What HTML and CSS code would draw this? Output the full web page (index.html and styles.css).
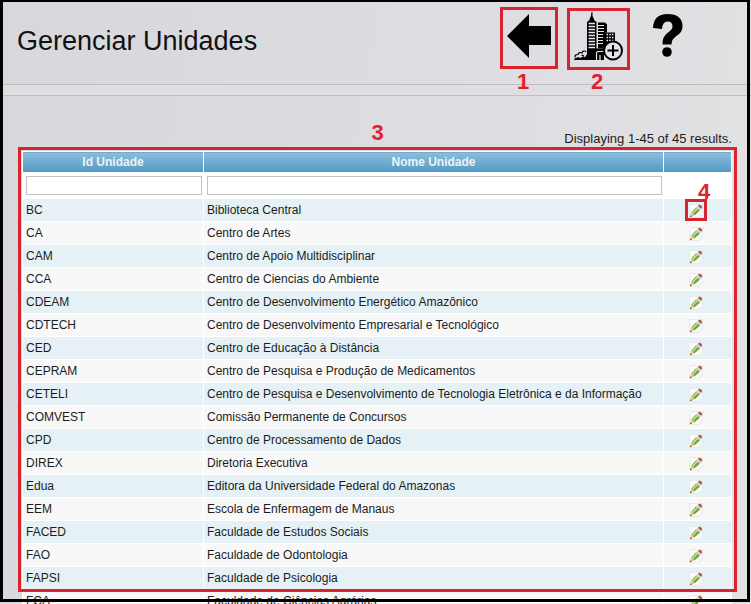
FILE: index.html
```html
<!DOCTYPE html>
<html lang="pt-BR">
<head>
<meta charset="utf-8">
<title>Gerenciar Unidades</title>
<link rel="stylesheet" href="styles.css">
</head>
<body>
<svg class="defs" aria-hidden="true">
  <defs>
    <linearGradient id="lead" x1="0" y1="0" x2="1" y2="1">
      <stop offset="0" stop-color="#a5cf72"/>
      <stop offset="1" stop-color="#4d8a2c"/>
    </linearGradient>
    <symbol id="pencil" viewBox="0 0 16 16">
      <path d="M1.500 1.500h13v10l-3 3h-10z" fill="#fbfbfb" stroke="#e6e9ea" stroke-width="1"/>
      <path d="M11.500 14.500v-3h3z" fill="#e9ecee"/>
      <path d="M2 14l1.200-4.500 3.500 2.800z" fill="#ecc56c"/>
      <path d="M2 14.300l.5-2 1.500 1.300z" fill="#5a4a28"/>
      <path d="M3.200 9.500L8 4.300l4 3.200-5.300 4.800z" fill="url(#lead)"/>
      <path d="M4.500 10.300l5-5" stroke="#cfe8a8" stroke-width="1.200"/>
      <path d="M8 4.300l1.600-1.600 4 3.200L12 7.500z" fill="#d8cfc4"/>
      <path d="M10 2.700l1.200-1q2.800.2 3 2.600l-1 1.400z" fill="#9c5342"/>
    </symbol>
  </defs>
</svg>
<header class="header">
  <h1>Gerenciar Unidades</h1>
  <nav class="tools" aria-label="Ações">
    <a class="tool marked" href="#" aria-label="Voltar">
      <svg width="44" height="44" viewBox="0 0 44 44"><path d="M0 22L22 0v12h22v19H22v13z"/></svg>
      <span class="mark">1</span>
    </a>
    <a class="tool marked wide" href="#" aria-label="Adicionar unidade">
      <svg width="50" height="50" viewBox="0 0 50 50">
        <path d="M17.500 0h1v4l1.500 3v1l2.500 2v38H13V10l2.500-2V7l1.500-3z"/>
        <path d="M14.500 11.500h6.500M14.500 14.500h6.500M14.500 17.500h6.500M14.500 20.500h6.500M14.500 23.500h6.500M14.500 26.500h6.500M14.500 29.500h6.500M14.500 32.500h6.500M14.500 35.500h6.500" stroke="#e8e6ea" stroke-width="1.300"/>
        <path d="M24 10.500h7l2 2v8h-2v16h-7z"/>
        <path d="M24 13.500h6M24 16.500h6M24 19.500h6M24 22.500h5M24 25.500h5M24 28.500h5M24 31.500h5" stroke="#e8e6ea"/>
        <path d="M31 20.500h10V33H31z"/>
        <path d="M32.500 22.500h7M32.500 25.500h7M32.500 28.500h7" stroke="#e8e6ea" stroke-width="1.600" stroke-dasharray="1.600 1.100"/>
        <path d="M20 48V38l1-1.500h9v11.500z"/>
        <path d="M22.500 48v-7l1-1.500h6M26 48v-5" fill="none" stroke="#e8e6ea" stroke-width="1.200"/>
        <path d="M1 45.500q-.5-3 3-3 1-3 4-1.500.5-3 4.500-1.500M7.500 43.500q1.500-.5 2.500 1" fill="none" stroke="#000" stroke-width="1.200"/>
        <path d="M0 48q.5-2.500 3.500-2.500 2-.5 3 .8 2-2.300 4.500-1L13 42h1.500v6z"/>
        <circle cx="39" cy="38.500" r="9" fill="#e5e3e7" stroke="#000" stroke-width="2"/>
        <path d="M39 33v11M33.500 38.500h11" stroke="#000" stroke-width="2"/>
      </svg>
      <span class="mark">2</span>
    </a>
    <a class="tool help" href="#" aria-label="Ajuda">
      <svg width="32" height="44" viewBox="0 0 32 44">
        <path d="M1 14Q1.500 0 15.500 0 30.500 0 30.500 12.500q0 5.500-5.500 9-5.500 3.500-5.500 9H10.500Q10 23 16 18.500q4.500-3 4.500-6Q20.500 7.500 15.500 7.500T10 15z"/>
        <circle cx="15" cy="38" r="4.800"/>
      </svg>
    </a>
  </nav>
</header>
<div class="band"></div>
<main class="content">
  <p class="summary">Displaying 1-45 of 45 results.</p>
  <div class="grid">
    <table>
      <colgroup><col class="col-id"><col class="col-name"><col class="col-edit"></colgroup>
      <thead>
        <tr><th>Id Unidade</th><th>Nome Unidade</th><th></th></tr>
        <tr class="filters">
          <td><input type="text" aria-label="Id Unidade"></td>
          <td><input type="text" aria-label="Nome Unidade"></td>
          <td></td>
        </tr>
      </thead>
      <tbody>
        <tr><td>BC</td><td>Biblioteca Central</td><td><a class="edit marked" href="#" aria-label="Editar BC"><svg><use href="#pencil"/></svg><span class="mark">4</span></a></td></tr>
        <tr><td>CA</td><td>Centro de Artes</td><td><a class="edit" href="#" aria-label="Editar CA"><svg><use href="#pencil"/></svg></a></td></tr>
        <tr><td>CAM</td><td>Centro de Apoio Multidisciplinar</td><td><a class="edit" href="#" aria-label="Editar CAM"><svg><use href="#pencil"/></svg></a></td></tr>
        <tr><td>CCA</td><td>Centro de Ciencias do Ambiente</td><td><a class="edit" href="#" aria-label="Editar CCA"><svg><use href="#pencil"/></svg></a></td></tr>
        <tr><td>CDEAM</td><td>Centro de Desenvolvimento Energético Amazônico</td><td><a class="edit" href="#" aria-label="Editar CDEAM"><svg><use href="#pencil"/></svg></a></td></tr>
        <tr><td>CDTECH</td><td>Centro de Desenvolvimento Empresarial e Tecnológico</td><td><a class="edit" href="#" aria-label="Editar CDTECH"><svg><use href="#pencil"/></svg></a></td></tr>
        <tr><td>CED</td><td>Centro de Educação à Distância</td><td><a class="edit" href="#" aria-label="Editar CED"><svg><use href="#pencil"/></svg></a></td></tr>
        <tr><td>CEPRAM</td><td>Centro de Pesquisa e Produção de Medicamentos</td><td><a class="edit" href="#" aria-label="Editar CEPRAM"><svg><use href="#pencil"/></svg></a></td></tr>
        <tr><td>CETELI</td><td>Centro de Pesquisa e Desenvolvimento de Tecnologia Eletrônica e da Informação</td><td><a class="edit" href="#" aria-label="Editar CETELI"><svg><use href="#pencil"/></svg></a></td></tr>
        <tr><td>COMVEST</td><td>Comissão Permanente de Concursos</td><td><a class="edit" href="#" aria-label="Editar COMVEST"><svg><use href="#pencil"/></svg></a></td></tr>
        <tr><td>CPD</td><td>Centro de Processamento de Dados</td><td><a class="edit" href="#" aria-label="Editar CPD"><svg><use href="#pencil"/></svg></a></td></tr>
        <tr><td>DIREX</td><td>Diretoria Executiva</td><td><a class="edit" href="#" aria-label="Editar DIREX"><svg><use href="#pencil"/></svg></a></td></tr>
        <tr><td>Edua</td><td>Editora da Universidade Federal do Amazonas</td><td><a class="edit" href="#" aria-label="Editar Edua"><svg><use href="#pencil"/></svg></a></td></tr>
        <tr><td>EEM</td><td>Escola de Enfermagem de Manaus</td><td><a class="edit" href="#" aria-label="Editar EEM"><svg><use href="#pencil"/></svg></a></td></tr>
        <tr><td>FACED</td><td>Faculdade de Estudos Sociais</td><td><a class="edit" href="#" aria-label="Editar FACED"><svg><use href="#pencil"/></svg></a></td></tr>
        <tr><td>FAO</td><td>Faculdade de Odontologia</td><td><a class="edit" href="#" aria-label="Editar FAO"><svg><use href="#pencil"/></svg></a></td></tr>
        <tr><td>FAPSI</td><td>Faculdade de Psicologia</td><td><a class="edit" href="#" aria-label="Editar FAPSI"><svg><use href="#pencil"/></svg></a></td></tr>
        <tr><td>FCA</td><td>Faculdade de Ciências Agrárias</td><td><a class="edit" href="#" aria-label="Editar FCA"><svg><use href="#pencil"/></svg></a></td></tr>
      </tbody>
    </table>
    <div class="outline"><span class="mark">3</span></div>
  </div>
</main>
<div class="frame"></div>
</body>
</html>
```
FILE: styles.css
```css
* { box-sizing: border-box; }

body {
  margin: 0;
  height: 100vh;
  overflow: hidden;
  font-family: "Liberation Sans", Arial, sans-serif;
  font-size: 12px;
  color: #1c1c1c;
  background: linear-gradient(100deg, #d7d7dc, #dddce1 50%, #e2e2e4);
}

.defs { position: absolute; width: 0; height: 0; }

.header {
  display: flex;
  justify-content: space-between;
  height: 85px;
  padding: 7px 67px 0 17px;
  border-bottom: 1px solid #bfbfc2;
}

h1 {
  margin: 18px 0 0;
  font-size: 27px;
  line-height: 32px;
  font-weight: 400;
  color: #111;
}

.tools { display: flex; align-items: flex-start; gap: 9px; }

.tool {
  position: relative;
  display: flex;
  align-items: center;
  justify-content: center;
  width: 58px;
  height: 62px;
  padding-bottom: 4px;
  color: #000;
}

.tool.wide { width: 63px; margin-top: 1px; }
.tool.help { width: 32px; height: 62px; margin-left: 13px; }

.marked { border: 3px solid #d9232e; text-decoration: none; }

.tool .mark {
  position: absolute;
  top: 61px;
  left: 0;
  width: 40px;
  text-align: center;
}
.tool.wide .mark { width: 54px; top: 60px; }

.mark {
  font-size: 22px;
  line-height: 22px;
  font-weight: 700;
  color: #e3202c;
}

.band { height: 11px; background: #dfdfe1; border-bottom: 1px solid #bfbfc2; }

.content { padding: 34px 19px 0 22px; }

.summary {
  margin: 0;
  text-align: right;
  font-size: 13px;
  line-height: 18px;
  padding-bottom: 3px;
}

.grid { position: relative; }

table {
  width: 100%;
  table-layout: fixed;
  border-collapse: collapse;
  background: #fff;
}

.col-id { width: 181px; }
.col-edit { width: 68px; }

th, td { border: 1px solid #fff; padding: 0 3px; height: 23px; }

th {
  height: 21px;
  color: #e9f3f9;
  background: linear-gradient(#8dbeda, #5199c4);
}

.filters td { height: 26px; padding-right: 1px; }

input {
  display: block;
  width: 100%;
  height: 19px;
  border: 1px solid #c3c3c3;
  background: #fff;
  font: inherit;
}

tbody tr:nth-child(odd) { background: #e5f1f4; }
tbody tr:nth-child(even) { background: #f8f8f8; }

tbody td:last-child { padding-right: 6px; }

.edit {
  position: relative;
  display: flex;
  align-items: center;
  justify-content: center;
  width: 22px;
  height: 22px;
  margin: 0 auto;
  padding-top: 2px;
}
.edit svg { flex: none; width: 16px; height: 16px; }
.edit .mark { position: absolute; top: -21px; left: 10px; }

.outline {
  position: absolute;
  top: -4px;
  left: -4px;
  right: -5px;
  height: 445px;
  border: 3px solid #d9232e;
  pointer-events: none;
}
.outline .mark {
  position: absolute;
  top: -28px;
  left: 0;
  right: 0;
  text-align: center;
}

.frame {
  position: fixed;
  inset: 0 1px 2px 0;
  border: 3px solid #000;
  border-top-width: 2px;
  pointer-events: none;
}
```
